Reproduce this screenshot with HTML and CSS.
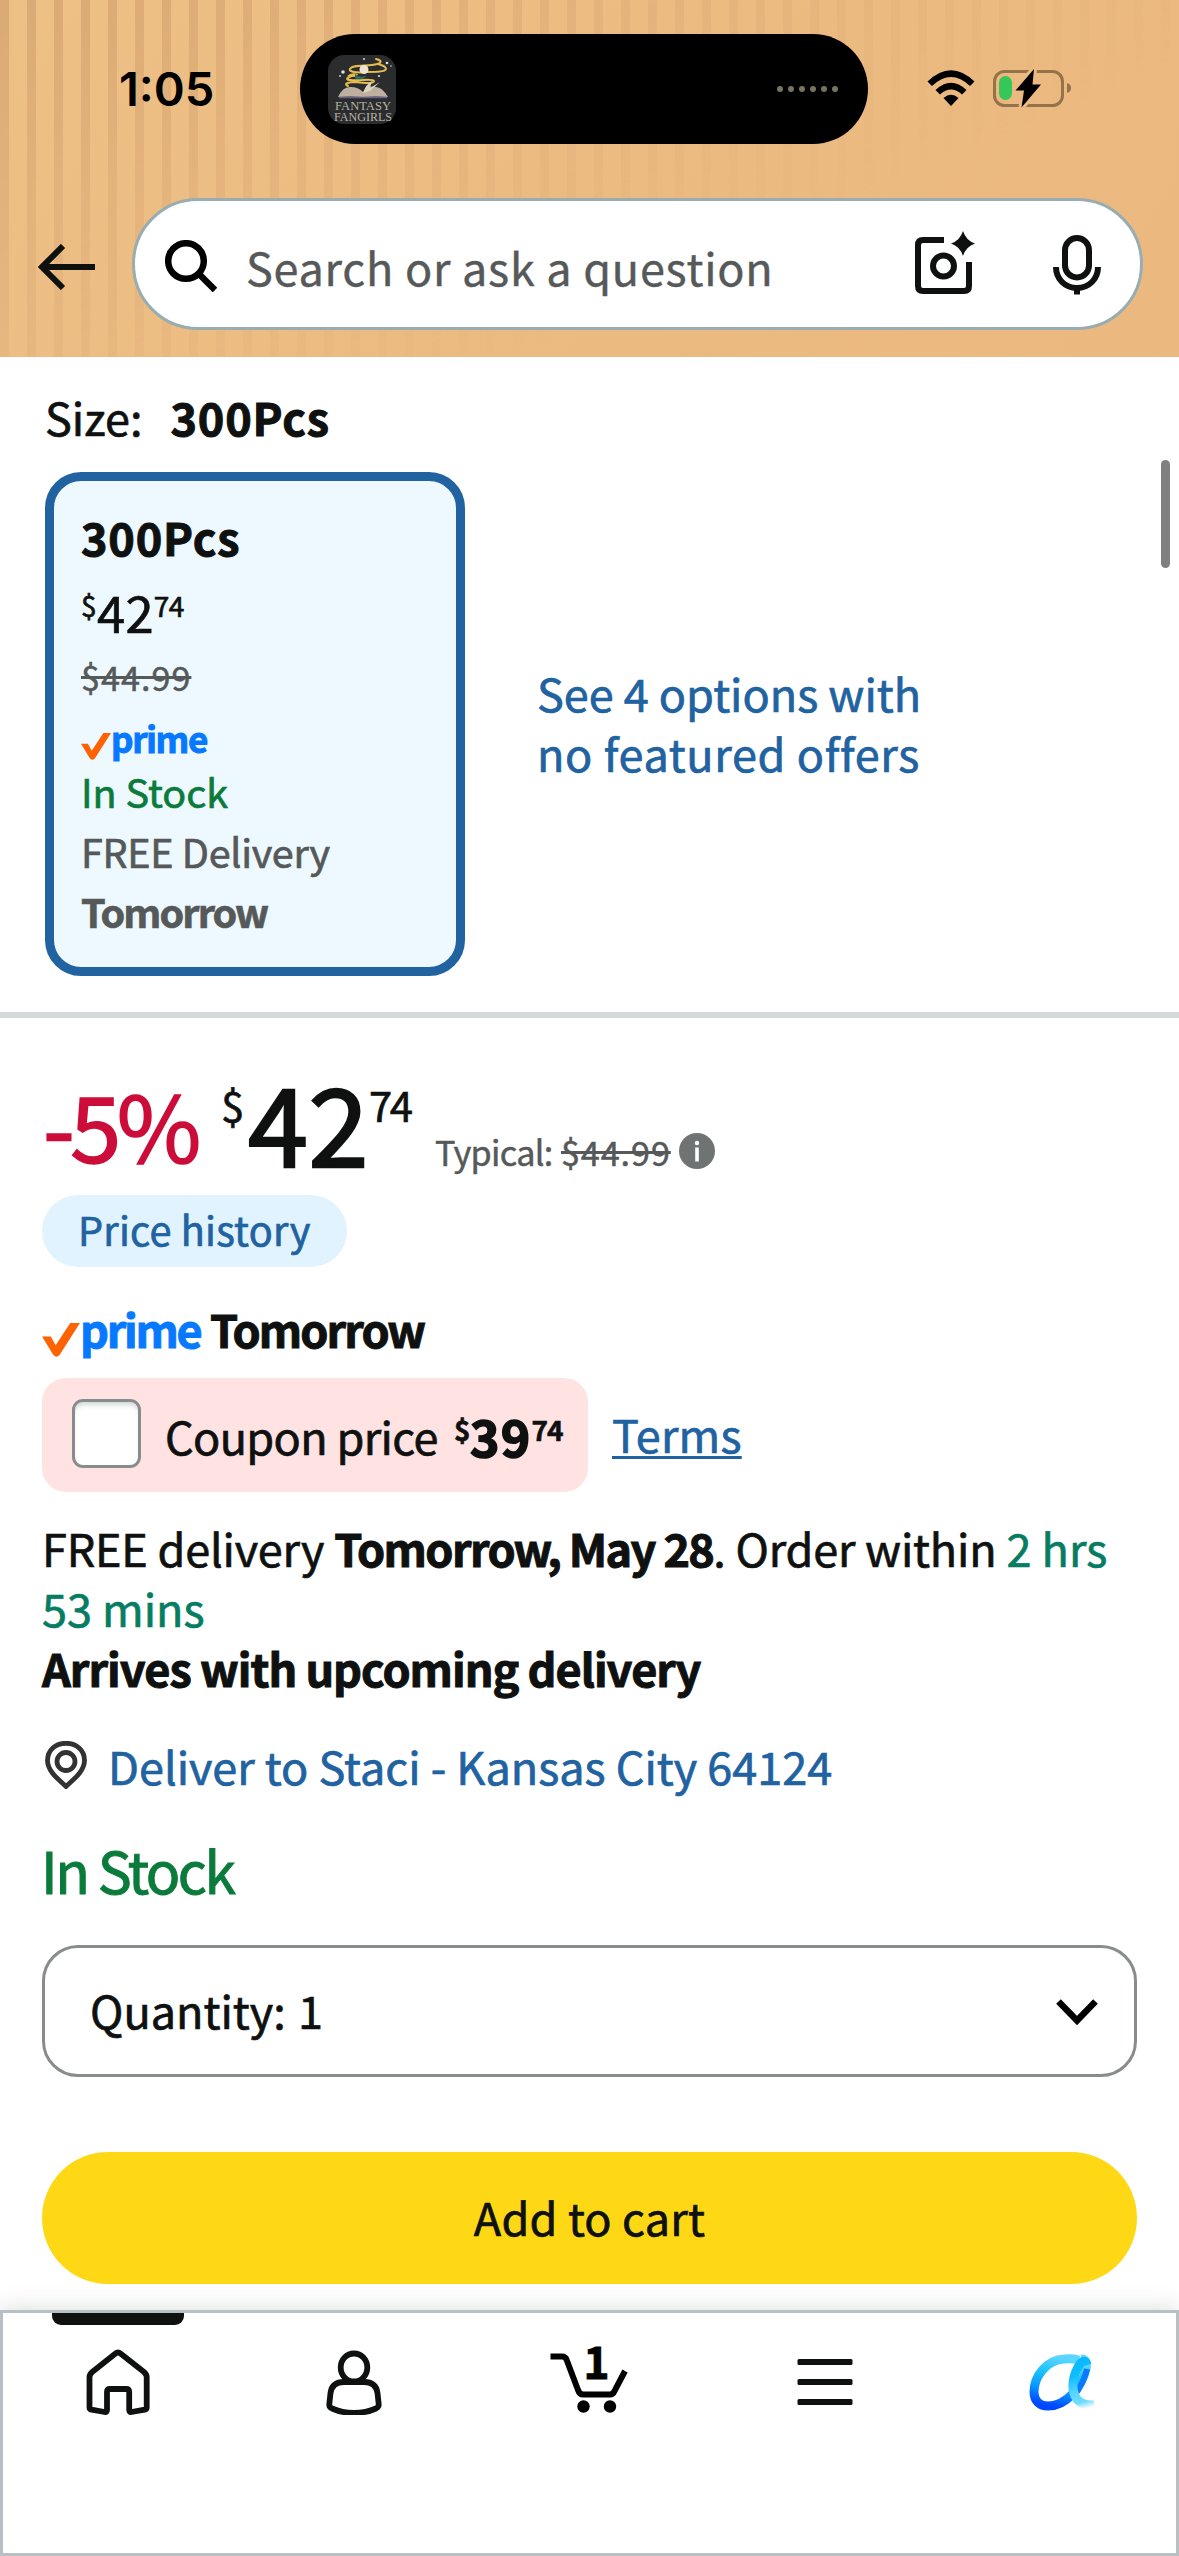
FILE: index.html
```html
<!DOCTYPE html>
<html lang="en">
<head>
<meta charset="utf-8">
<title>Product page</title>
<link rel="stylesheet" href="styles.css">
</head>
<body>
<div class="screen">
  <header class="header">
    <div class="stripes"></div>
    <div class="status">
      <div class="clock">1:05</div>
      <div class="island">
        <svg class="album" viewBox="0 0 68 69">
          <rect width="68" height="69" rx="16" fill="#2a2c2e"/>
          <g fill="none" stroke="#e6bc4f" stroke-linecap="round">
            <path d="M48 4c8 2 5 5-4 6-9 1-20 0-22 4-2 3 8 4 17 3 9 0 18 0 19-3 0-2-4-4-8-5" stroke-width="2"/>
            <path d="M27 20c-8 2-11 5-4 5 7 1 22-2 23 1 0 3-10 2-18 1-8 0-13 2-8 4" stroke-width="2"/>
          </g>
          <path d="M19 21q4-4 11-2l-2 3z" fill="#e6bc4f"/>
          <path d="M27 19q6 5 12 1l-4 4q-5 1-8-1z" fill="#2c6f60"/>
          <circle cx="36" cy="14.500" r="4.500" fill="#eee4cf"/>
          <path d="M10 42q5-11 13-10 7 0 12 5 6-7 13-5 6 0 12 10-12-1-25 0-12-1-25 0z" fill="#bdb0a0"/>
          <path d="M35 38q3-9 9-12l-2 7 10-6-10 9z" fill="#ded4bf"/>
          <path d="M11 42.500h48" stroke="#6a5f8a" stroke-width="1.500"/>
          <g fill="#ddd"><circle cx="15" cy="17" r="1.800"/><circle cx="36" cy="4" r="1"/><circle cx="59" cy="8" r="1.300"/><circle cx="63" cy="11" r=".8"/><circle cx="51" cy="21" r="1.100"/><circle cx="12" cy="21" r=".9"/></g>
          <text x="7" y="54.500" textLength="56" lengthAdjust="spacingAndGlyphs" class="album-text">FANTASY</text>
          <text x="6" y="65.500" textLength="58" lengthAdjust="spacingAndGlyphs" class="album-text">FANGIRLS</text>
        </svg>
        <svg class="dots" viewBox="0 0 61 6" fill="#77745f"><circle cx="3" cy="3" r="3"/><circle cx="14" cy="3" r="3"/><circle cx="25" cy="3" r="3"/><circle cx="36" cy="3" r="3"/><circle cx="47" cy="3" r="3"/><circle cx="58" cy="3" r="3"/></svg>
      </div>
      <svg class="wifi" viewBox="0 0 48 36">
        <path d="M0.500 11.500Q24-11 47.500 11.500L43 16Q24-2 5 16z"/>
        <path d="M8.500 20Q24 5.500 39.500 20L35 24.500Q24 14.500 13 24.500z"/>
        <path d="M16.500 28Q24 21.500 31.500 28L24 36z"/>
      </svg>
      <svg class="battery" viewBox="0 0 80 40">
        <rect x="2.500" y="3.500" width="68" height="34" rx="10" fill="none" stroke="#94724a" stroke-width="3"/>
        <path d="M75 15q4 1 4 5t-4 5z" fill="#94724a"/>
        <path d="M42 1L23.500 22.500H32L29.500 39.500L49 16.500H40.500z" fill="#000" stroke="#ecba80" stroke-width="6" paint-order="stroke"/>
        <rect x="7" y="8" width="13" height="24" rx="6.500" fill="#35c759"/>
      </svg>
    </div>
    <div class="search-row">
      <svg class="back" viewBox="0 0 57 46" fill="none" stroke="#0f1111" stroke-width="6"><path d="M25 2L4 23l21 21M4 23h53"/></svg>
      <div class="search">
        <svg class="glass" viewBox="0 0 52 52" fill="none" stroke="#000" stroke-width="6.500"><circle cx="21" cy="21" r="17.800"/><path d="M34 34l16 16"/></svg>
        <span class="placeholder">Search or ask a question</span>
        <svg class="camera" viewBox="0 0 64 64" fill="none" stroke="#0f1111" stroke-width="6"><path d="M32 9H11q-5 0-5 5v41q0 5 5 5h41q5 0 5-5V31"/><circle cx="31.500" cy="35" r="10.500"/><path d="M51 0q3 9.500 12 12.500q-9 3-12 12.500q-3-9.500-12-12.500q9-3 12-12.500z" fill="#0f1111" stroke="none"/></svg>
        <svg class="mic" viewBox="0 0 48 60" fill="none" stroke="#0f1111" stroke-width="6"><rect x="12" y="3" width="24" height="39.500" rx="12"/><path d="M3 32c0 12 9 21 21 21s21-9 21-21M24 53v6.500"/></svg>
      </div>
    </div>
  </header>

  <main class="content">
    <div class="scrollbar"></div>
    <div class="size-label"><span>Size:</span><b>300Pcs</b></div>
    <div class="options">
      <div class="card">
        <div class="card-name">300Pcs</div>
        <div class="card-price"><span class="sup">$</span><span>42</span><span class="sup">74</span></div>
        <div class="card-list">$44.99</div>
        <div class="prime prime-sm"><svg viewBox="0 0 39 35"><path d="M0 14h9l5 9L29 0h10L18 33q-4 4-7-1z" fill="#ff6200"/></svg><b>prime</b></div>
        <div class="card-stock">In Stock</div>
        <div class="card-free">FREE Delivery</div>
        <div class="card-day">Tomorrow</div>
      </div>
      <div class="more">See 4 options with<br><span class="more-2">no featured offers</span></div>
    </div>
    <div class="divider"></div>

    <section class="offer">
      <div class="price-row">
        <span class="off">-5%</span>
        <span class="cur">$</span>
        <span class="whole">42</span>
        <span class="cents">74</span>
        <span class="typical"><span class="typ-label">Typical:</span><span class="typ-price">$44.99</span>
          <svg class="info" viewBox="0 0 36 36"><circle cx="18" cy="18" r="18" fill="#6f7373"/><circle cx="18" cy="10" r="2.200" fill="#fff"/><path d="M18 14.500v14" stroke="#fff" stroke-width="3.600"/></svg></span>
      </div>
      <div class="pill">Price history</div>
      <div class="prime prime-lg"><svg viewBox="0 0 39 35"><path d="M0 14h9l5 9L29 0h10L18 33q-4 4-7-1z" fill="#ff6200"/></svg><b>prime</b><span class="day">Tomorrow</span></div>
      <div class="coupon-row">
        <div class="coupon"><span class="check"></span><span class="coupon-text">Coupon price</span><span class="csup cdollar">$</span><span class="cwhole">39</span><span class="csup">74</span></div>
        <span class="terms">Terms</span>
      </div>
      <div class="delivery"><span class="free">FREE delivery </span><b class="date">Tomorrow, May 28</b><span class="order">. Order within</span> <span class="time">2 hrs<br>53 mins</span><br><b class="arrives">Arrives with upcoming delivery</b></div>
      <div class="address">
        <svg class="pin" viewBox="0 0 42 48" fill="none" stroke="#333" stroke-width="4.800"><path d="M21 45.500C13 38 2.500 30 2.500 19.500C2.500 9 10.500 2.300 21 2.300S39.500 9 39.500 19.500C39.500 30 29 38 21 45.500z"/><circle cx="21" cy="20.500" r="9"/></svg>
        <span>Deliver to Staci - Kansas City 64124</span>
      </div>
      <div class="stock">In Stock</div>
      <div class="select"><span class="qty">Quantity:</span><span>1</span><svg class="chev" viewBox="0 0 42 27" fill="none" stroke="#000" stroke-width="6.500"><path d="M2.500 2.500L21 21.500L39.500 2.500"/></svg></div>
      <div class="button">Add to cart</div>
    </section>
  </main>

  <nav class="tabs">
    <div class="tab active"><svg viewBox="0 0 70 70" fill="none" stroke="#0f1111" stroke-width="5.800" stroke-linejoin="round"><path d="M32.500 8.500q2.500-2.200 5 0L61 27q2.700 2.300 2.700 5v30.500q0 1.800-2 2.200L48.500 67q-2.300.4-2.300-2V47q0-3-3-3H27q-3 0-3 3v18q0 2.400-2.300 2L8.500 64.700q-2-.4-2-2.200V32q0-2.700 2.700-5z"/></svg></div>
    <div class="tab"><svg viewBox="0 0 70 70" fill="none" stroke="#0f1111" stroke-width="5.800" stroke-linejoin="round"><ellipse cx="35" cy="22.500" rx="13.300" ry="14"/><path d="M25 37h20q12 0 13.500 11l1.200 11q.3 3-2.700 4.500Q47 68 35 68T13 63.500Q10 62 10.300 59l1.200-11Q13 37 25 37z"/></svg></div>
    <div class="tab cart"><svg viewBox="0 0 80 70" fill="none" stroke="#000" stroke-width="6"><path d="M1.500 11.500H13q3.500 0 4.700 3.500L29 45q1.500 4.500 5 4.500h27q3 0 4.500-3.500L76 26" /><circle cx="34.500" cy="61.500" r="6.200" fill="#000" stroke="none"/><circle cx="61" cy="61.500" r="6.200" fill="#000" stroke="none"/></svg><span class="count">1</span></div>
    <div class="tab"><svg viewBox="0 0 70 70" fill="#0f1111"><rect x="7.500" y="14" width="55" height="6" rx="1.500"/><rect x="7.500" y="34" width="55" height="6" rx="1.500"/><rect x="7.500" y="54" width="55" height="6" rx="1.500"/></svg></div>
    <div class="tab"><svg viewBox="0 0 70 70" fill="none" stroke-width="9">
      <defs>
        <linearGradient id="loop" x1=".6" y1="0" x2=".35" y2="1"><stop offset="0" stop-color="#5cd6ff"/><stop offset=".35" stop-color="#1cc3ff"/><stop offset=".65" stop-color="#0a9cff"/><stop offset="1" stop-color="#0048ff"/></linearGradient>
        <linearGradient id="tail" gradientUnits="userSpaceOnUse" x1="54" y1="14" x2="67" y2="62"><stop offset="0" stop-color="#08b8ff"/><stop offset=".3" stop-color="#0fbcff"/><stop offset=".65" stop-color="#5cd6ff"/><stop offset=".85" stop-color="#6fdcff"/><stop offset="1" stop-color="#6fdcff" stop-opacity="0"/></linearGradient>
      </defs>
      <path d="M53 15Q45 13 38 14C20 15 8 32 8 47C8 56 14 61 22 61C41 61 56 41 60 24Q62 14 55 14" stroke="url(#loop)"/>
      <path d="M61 24C59 34 54 42 51 47" stroke="#0a78ff" stroke-width="6"/>
      <path d="M61 20Q59 13 54 19C47 29 45 42 49 51Q54 61 68 60" stroke="url(#tail)"/>
    </svg></div>
  </nav>
</div>
</body>
</html>
```
FILE: styles.css
```css
* { box-sizing: border-box; }
body {
  margin: 0;
  width: 1179px;
  background: #fff;
  color: #0f1111;
  font-family: "Noto Sans CJK SC", "Noto Sans", sans-serif;
  font-size: 45px;
  line-height: 60px;
  -webkit-text-stroke: .7px currentColor;
}
svg { display: block; flex: none; }
span, b { white-space: pre; }
b, .card-name, .card-day, .day, .csup, .cwhole, .count { -webkit-text-stroke: 1px currentColor; }
.screen { height: 2556px; overflow: hidden; display: flex; flex-direction: column; }

/* header */
.header {
  height: 357px;
  position: relative;
  background: linear-gradient(125deg, #edc086 0%, #ecbb82 45%, #ebb97f 100%);
}
.stripes {
  position: absolute;
  inset: 0;
  background: repeating-linear-gradient(90deg, rgba(200, 148, 98, .5) 0 9px, transparent 9px 27px);
  -webkit-mask-image: linear-gradient(156deg, #000 0%, rgba(0, 0, 0, .45) 30%, rgba(0, 0, 0, .2) 48%, transparent 66%);
  mask-image: linear-gradient(156deg, #000 0%, rgba(0, 0, 0, .45) 30%, rgba(0, 0, 0, .2) 48%, transparent 66%);
}
.status { position: relative; height: 178px; display: flex; align-items: center; }
.clock {
  width: 300px;
  padding-left: 119px;
  font-family: Inter, sans-serif;
  font-weight: 600;
  font-size: 47px;
  color: #000;
  -webkit-text-stroke: 0;
}
.island {
  width: 568px;
  height: 110px;
  border-radius: 55px;
  background: #000;
  display: flex;
  align-items: center;
  justify-content: space-between;
  padding: 0 30px 0 28px;
}
.album { width: 68px; height: 69px; }
.album-text { font-family: "Liberation Serif", serif; font-size: 13px; fill: #b9b3a4; -webkit-text-stroke: 0; }
.dots { width: 61px; height: 6px; }
.wifi { width: 48px; height: 36px; margin: 0 17px 2px 59px; }
.battery { width: 80px; height: 40px; margin-bottom: 2px; }
.search-row {
  position: relative;
  margin-top: 20px;
  padding: 0 36px 0 38px;
  display: flex;
  align-items: center;
}
.back { width: 57px; height: 46px; margin: 5px 37px 0 0; }
.search {
  flex: 1;
  height: 132px;
  border: 3px solid #99adb0;
  border-radius: 66px;
  background: #fff;
  display: flex;
  align-items: center;
  padding-left: 30px;
}
.glass { width: 52px; height: 52px; margin-top: 3px; }
.placeholder { width: 691px; padding-left: 29px; padding-top: 5px; color: #565959; letter-spacing: .75px; -webkit-text-stroke-width: .4px; }
.camera { width: 64px; height: 64px; margin: 0 0 2px 4px; }
.mic { width: 48px; height: 60px; margin-left: 77px; margin-top: 2px; }

/* size options */
.content { position: relative; padding-top: 30px; flex: none; }
.scrollbar {
  position: absolute;
  top: 103px;
  right: 9px;
  width: 9px;
  height: 108px;
  border-radius: 5px;
  background: #808080;
}
.size-label { padding-left: 45px; display: flex; gap: 28px; }
.size-label b, .card-name { letter-spacing: .8px; font-weight: 700; }
.options { margin: 25px 0 36px; padding-left: 45px; display: flex; align-items: center; }
.card {
  width: 420px;
  height: 504px;
  border: 9px solid #2162a1;
  border-radius: 36px;
  background: #edf8ff;
  padding: 26px 27px;
}
.card-price { display: flex; margin-top: 14px; font-size: 50.7px; letter-spacing: .2px; }
.card-price .sup { font-size: 28px; line-height: 40px; margin: 4px 1px 0 0; letter-spacing: -.5px; }
.card-list { width: fit-content; margin-top: 10px; line-height: 50px; font-size: 34.2px; letter-spacing: 1px; color: #565959; text-decoration: line-through; text-decoration-thickness: 3px; -webkit-text-stroke-width: .5px; }
.card-stock { font-size: 39.5px; color: #0b7b3c; }
.card-free { font-size: 39.5px; color: #565959; letter-spacing: -.3px; }
.card-day { font-size: 39.5px; color: #565959; font-weight: 700; letter-spacing: -1.9px; -webkit-text-stroke-width: .7px; }
.prime { display: flex; align-items: center; }
.prime b { color: #0779ff; font-weight: 700; }
.prime-sm { margin-top: 10px; line-height: 50px; }
.prime-sm svg { width: 30px; height: 27px; margin-top: 21px; }
.prime-sm b { font-size: 35px; letter-spacing: -1.3px; padding-top: 3px; line-height: 47px; }
.more { margin: 0 0 2px 72px; color: #2162a1; }
.more-2 { letter-spacing: .65px; }
.divider { height: 6px; background: #d5d9d9; }

/* offer */
.offer { padding: 49px 42px 0; }
.price-row { display: flex; height: 110px; line-height: 110px; align-items: flex-start; }
.off { width: 179px; padding-left: 1px; margin-top: 1px; font-size: 91.8px; letter-spacing: -4.5px; color: #cc0c39; -webkit-text-stroke-width: 1.600px; }
.cur { width: 27px; font-size: 41.8px; line-height: 60px; margin-top: 7px; }
.whole { width: 121px; margin-top: -2px; font-size: 108px; font-weight: 400; letter-spacing: .5px; -webkit-text-stroke-width: 2.400px; }
.cents { width: 66px; font-size: 41.8px; line-height: 60px; margin-top: 7px; letter-spacing: -2.5px; }
.typical { display: flex; margin-top: 59px; line-height: 50px; font-size: 34.2px; color: #565959; -webkit-text-stroke-width: .5px; }
.typ-label { width: 126px; letter-spacing: -.7px; }
.typ-price { height: 50px; letter-spacing: .9px; text-decoration: line-through; text-decoration-thickness: 3px; }
.info { width: 36px; height: 36px; margin: 7px 0 0 8px; }
.pill {
  width: 305px;
  height: 72px;
  margin-top: 18px;
  padding-left: 36px;
  border-radius: 36px;
  background: #e0f3ff;
  color: #2162a1;
  font-size: 39.700px;
  line-height: 68px;
  letter-spacing: .2px;
}
.prime-lg { margin-top: 32px; }
.prime-lg svg { width: 38px; height: 34px; margin-top: 22px; }
.prime-lg b { width: 130px; font-size: 45px; letter-spacing: -2.300px; }
.day { font-weight: 700; letter-spacing: -1.9px; }
.coupon-row { display: flex; align-items: center; margin-top: 19px; gap: 24px; }
.coupon {
  width: 546px;
  height: 114px;
  border-radius: 24px;
  background: #ffe2e2;
  display: flex;
  align-items: center;
  padding-left: 30px;
}
.check {
  width: 69px;
  height: 69px;
  border: 3px solid #888c8c;
  border-radius: 11px;
  background: #fff;
  box-shadow: inset 0 5px 5px -2px #d5d9d9;
  margin: 0 24px 3px 0;
}
.coupon-text { width: 289px; padding-top: 2px; letter-spacing: -.65px; }
.csup { font-size: 28px; font-weight: 700; line-height: 40px; margin-bottom: 12px; letter-spacing: -1px; -webkit-text-stroke-width: .6px; }
.cdollar { width: 16px; }
.cwhole { font-size: 50px; font-weight: 700; letter-spacing: 1.200px; -webkit-text-stroke-width: 1.600px; }
.terms { color: #2162a1; letter-spacing: .2px; padding-bottom: 2px; text-decoration: underline; text-decoration-thickness: 3px; text-underline-offset: 3px; }
.delivery { margin-top: 26px; }
.free { letter-spacing: -.2px; }
.date { letter-spacing: -1.600px; }
.order { letter-spacing: -.2px; }
.time { color: #067d62; }
.arrives { letter-spacing: -1px; }
.address { margin-top: 38px; display: flex; align-items: center; color: #2162a1; }
.pin { width: 42px; height: 48px; margin: 0 21px 2px 3px; }
.stock { margin-top: 43px; font-size: 57px; letter-spacing: -2.500px; color: #0b7b3c; -webkit-text-stroke-width: 1px; text-indent: -1px; }
.select {
  height: 132px;
  margin-top: 46px;
  border: 3px solid #888c8c;
  border-radius: 36px;
  display: flex;
  align-items: center;
  padding: 0 36px 3px 45px;
}
.qty { width: 208px; }
.chev { width: 42px; height: 27px; margin: 5px 0 0 auto; }
.button {
  height: 132px;
  margin-top: 75px;
  border-radius: 66px;
  background: #fed815;
  text-align: center;
  line-height: 129px;
  letter-spacing: .2px;
}

/* bottom tabs */
.tabs {
  position: relative;
  margin-top: 26px;
  height: 246px;
  display: grid;
  grid-template-columns: repeat(5, 1fr);
  background: #fff;
  box-shadow: inset 0 0 0 3px #b9c0c4, 0 0 24px rgba(15, 30, 30, .16);
}
.tab { position: relative; display: flex; justify-content: center; padding-top: 35px; }
.tab svg { width: 70px; height: 70px; }
.active::before {
  content: "";
  position: absolute;
  top: 3px;
  left: 52px;
  width: 132px;
  height: 12px;
  border-radius: 0 0 9px 9px;
  background: #0f1111;
}
.cart svg { width: 80px; }
.count { position: absolute; left: 112px; top: 20px; font-weight: 700; font-size: 44px; color: #000; }
```
